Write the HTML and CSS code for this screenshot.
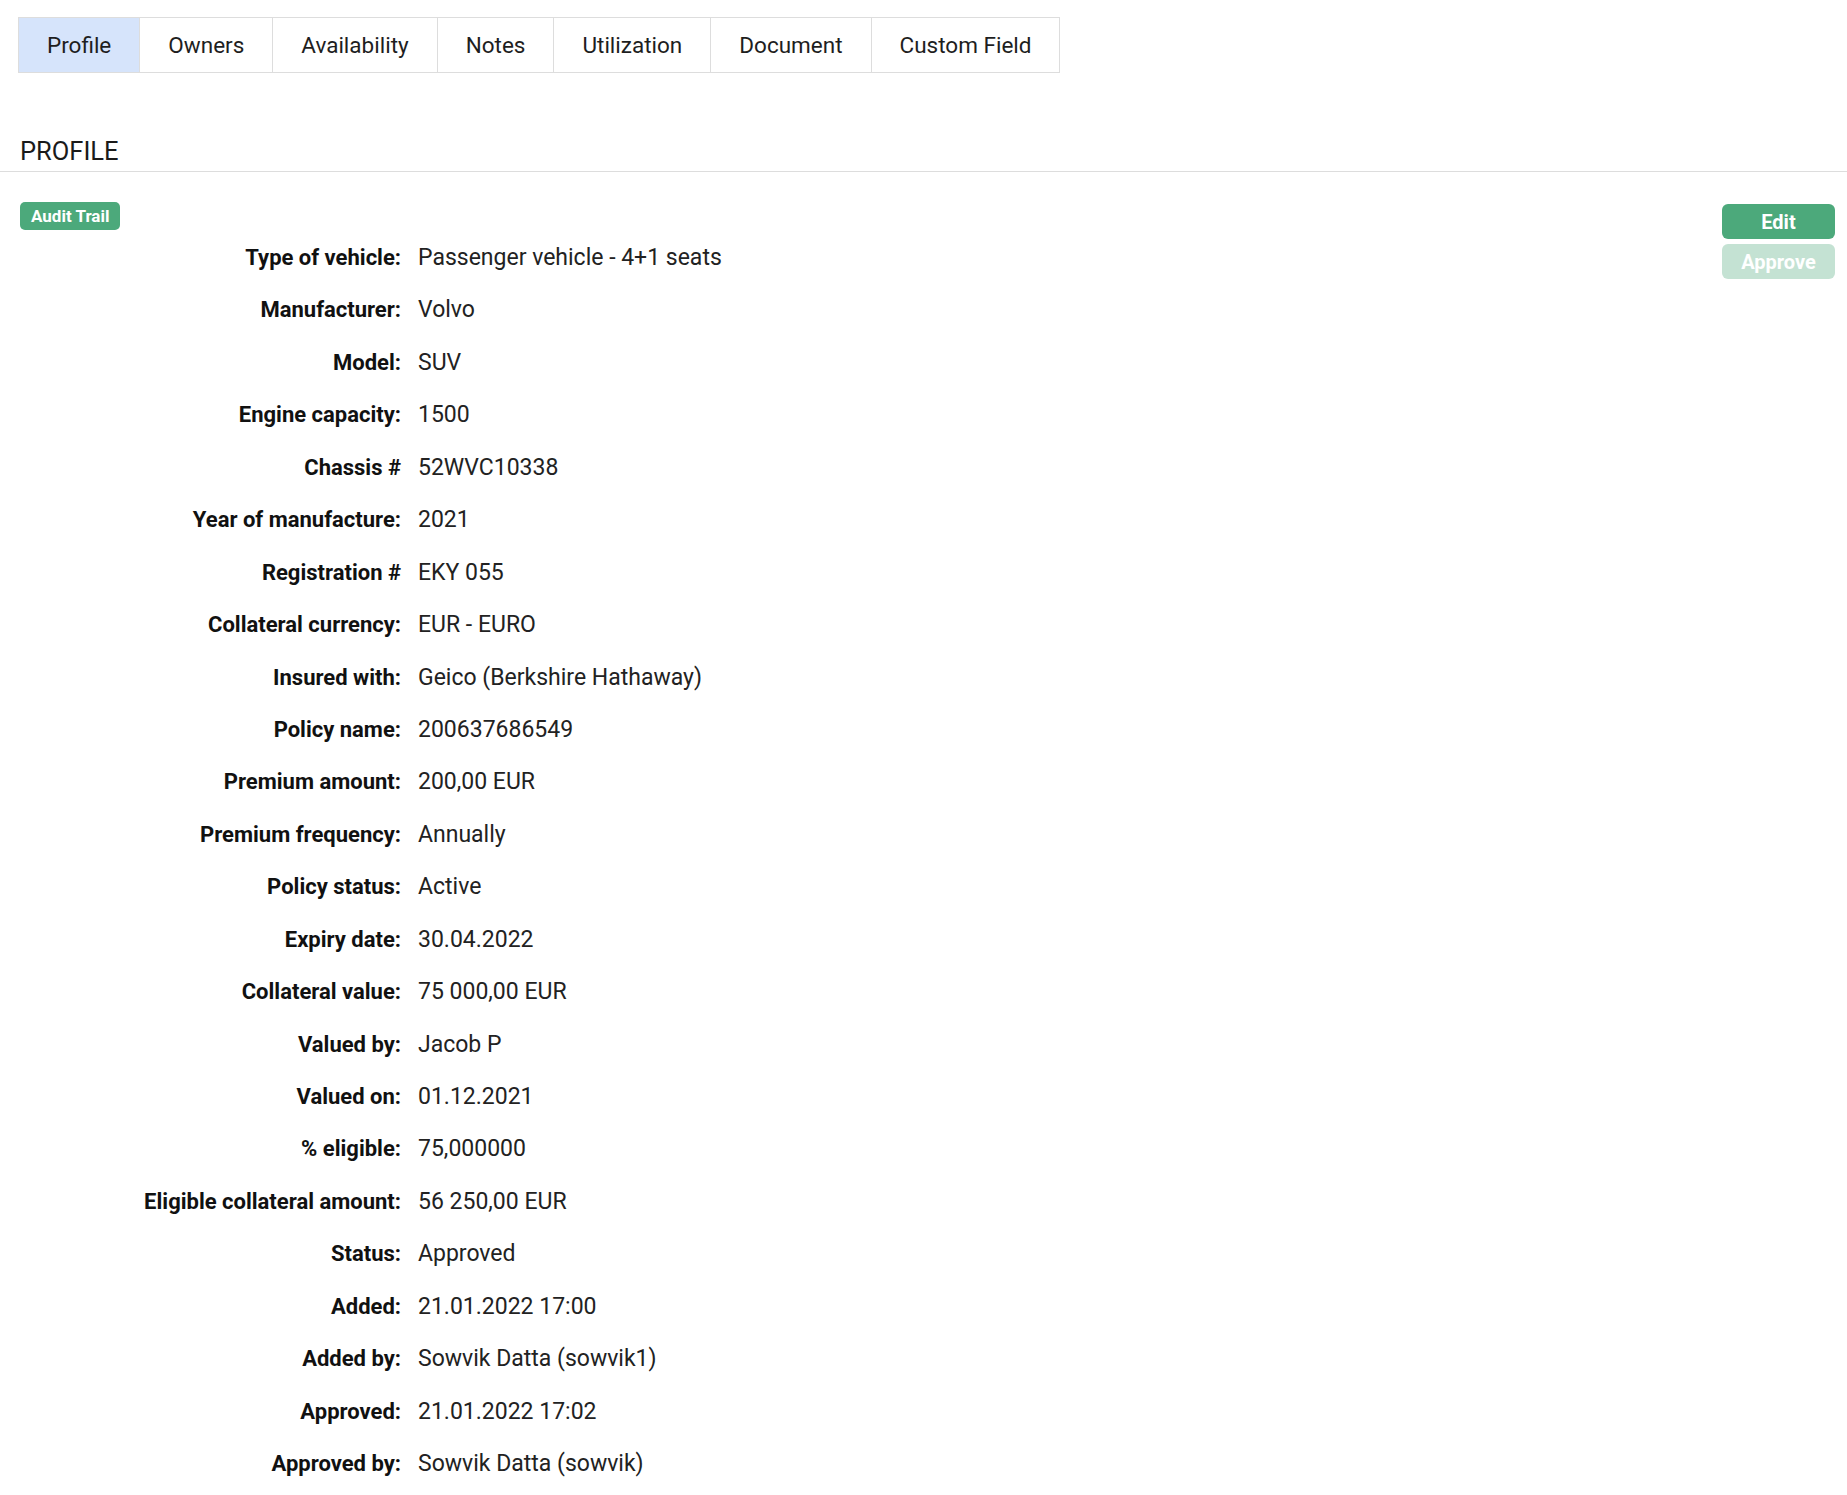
FILE: index.html
```html
<!DOCTYPE html>
<html lang="en">
<head>
<meta charset="utf-8">
<title>Profile</title>
<link rel="stylesheet" href="styles.css">
</head>
<body>
<div class="page">
  <nav class="tabs">
    <a class="tab active">Profile</a>
    <a class="tab">Owners</a>
    <a class="tab">Availability</a>
    <a class="tab">Notes</a>
    <a class="tab">Utilization</a>
    <a class="tab">Document</a>
    <a class="tab">Custom Field</a>
  </nav>

  <h2 class="section-title">PROFILE</h2>

  <div class="panel">
    <div class="panel-main">
      <button class="badge">Audit Trail</button>
      <dl class="fields">
        <dt>Type of vehicle:</dt><dd>Passenger vehicle - 4+1 seats</dd>
        <dt>Manufacturer:</dt><dd>Volvo</dd>
        <dt>Model:</dt><dd>SUV</dd>
        <dt>Engine capacity:</dt><dd>1500</dd>
        <dt>Chassis #</dt><dd>52WVC10338</dd>
        <dt>Year of manufacture:</dt><dd>2021</dd>
        <dt>Registration #</dt><dd>EKY 055</dd>
        <dt>Collateral currency:</dt><dd>EUR - EURO</dd>
        <dt>Insured with:</dt><dd>Geico (Berkshire Hathaway)</dd>
        <dt>Policy name:</dt><dd>200637686549</dd>
        <dt>Premium amount:</dt><dd>200,00 EUR</dd>
        <dt>Premium frequency:</dt><dd>Annually</dd>
        <dt>Policy status:</dt><dd>Active</dd>
        <dt>Expiry date:</dt><dd>30.04.2022</dd>
        <dt>Collateral value:</dt><dd>75 000,00 EUR</dd>
        <dt>Valued by:</dt><dd>Jacob P</dd>
        <dt>Valued on:</dt><dd>01.12.2021</dd>
        <dt>% eligible:</dt><dd>75,000000</dd>
        <dt>Eligible collateral amount:</dt><dd>56 250,00 EUR</dd>
        <dt>Status:</dt><dd>Approved</dd>
        <dt>Added:</dt><dd>21.01.2022 17:00</dd>
        <dt>Added by:</dt><dd>Sowvik Datta (sowvik1)</dd>
        <dt>Approved:</dt><dd>21.01.2022 17:02</dd>
        <dt>Approved by:</dt><dd>Sowvik Datta (sowvik)</dd>
      </dl>
    </div>
    <div class="actions">
      <button class="btn btn-edit">Edit</button>
      <button class="btn btn-approve">Approve</button>
    </div>
  </div>
</div>
</body>
</html>
```

FILE: styles.css
```css
* {
  box-sizing: border-box;
}

html, body {
  margin: 0;
  padding: 0;
  background: #ffffff;
}

body {
  font-family: Roboto, "Liberation Sans", Arial, sans-serif;
  color: #1e1e1e;
  font-size: 22px;
}

.page {
  width: 100%;
}

/* Tabs */
.tabs {
  display: inline-flex;
  margin: 17px 0 0 18px;
  border: 1px solid #dddddd;
}

.tab {
  display: flex;
  align-items: center;
  height: 54px;
  padding: 0 28px;
  font-size: 22.5px;
  color: #1e1e1e;
  border-left: 1px solid #dddddd;
  cursor: pointer;
}

.tab:first-child {
  border-left: none;
}

.tab.active {
  background: #d6e4fb;
}

/* Section title */
.section-title {
  margin: 63px 0 0 0;
  padding: 0 0 5px 20px;
  font-size: 25.5px;
  line-height: 30px;
  font-weight: 400;
  color: #1a1a1a;
  border-bottom: 1px solid #dddddd;
}

/* Panel */
.panel {
  display: flex;
  align-items: flex-start;
  padding: 0 12px 0 20px;
}

.panel-main {
  flex: 1;
}

.badge {
  display: block;
  margin: 30px 0 0 0;
  height: 28px;
  padding: 0 11px;
  border: none;
  border-radius: 5px;
  background: #4ca97b;
  color: #ffffff;
  font-family: Roboto, "Liberation Sans", Arial, sans-serif;
  font-size: 17px;
  font-weight: 700;
  cursor: pointer;
}

.fields {
  display: grid;
  grid-template-columns: 381px 1fr;
  grid-auto-rows: 52.45px;
  column-gap: 17px;
  margin: 2px 0 0 0;
}

.fields dt,
.fields dd {
  margin: 0;
  line-height: 52.45px;
  white-space: nowrap;
}

.fields dt {
  text-align: right;
  font-weight: 700;
  color: #111111;
  font-size: 22px;
}

.fields dd {
  color: #222222;
  font-size: 23px;
}

/* Actions */
.actions {
  display: flex;
  flex-direction: column;
  gap: 5px;
  width: 113px;
  margin-top: 32px;
}

.btn {
  height: 35px;
  border: none;
  border-radius: 6px;
  color: #ffffff;
  font-family: Roboto, "Liberation Sans", Arial, sans-serif;
  font-size: 20px;
  font-weight: 700;
  cursor: pointer;
}

.btn-edit {
  background: #4ca97b;
}

.btn-approve {
  background: #c4e2d3;
}
```
